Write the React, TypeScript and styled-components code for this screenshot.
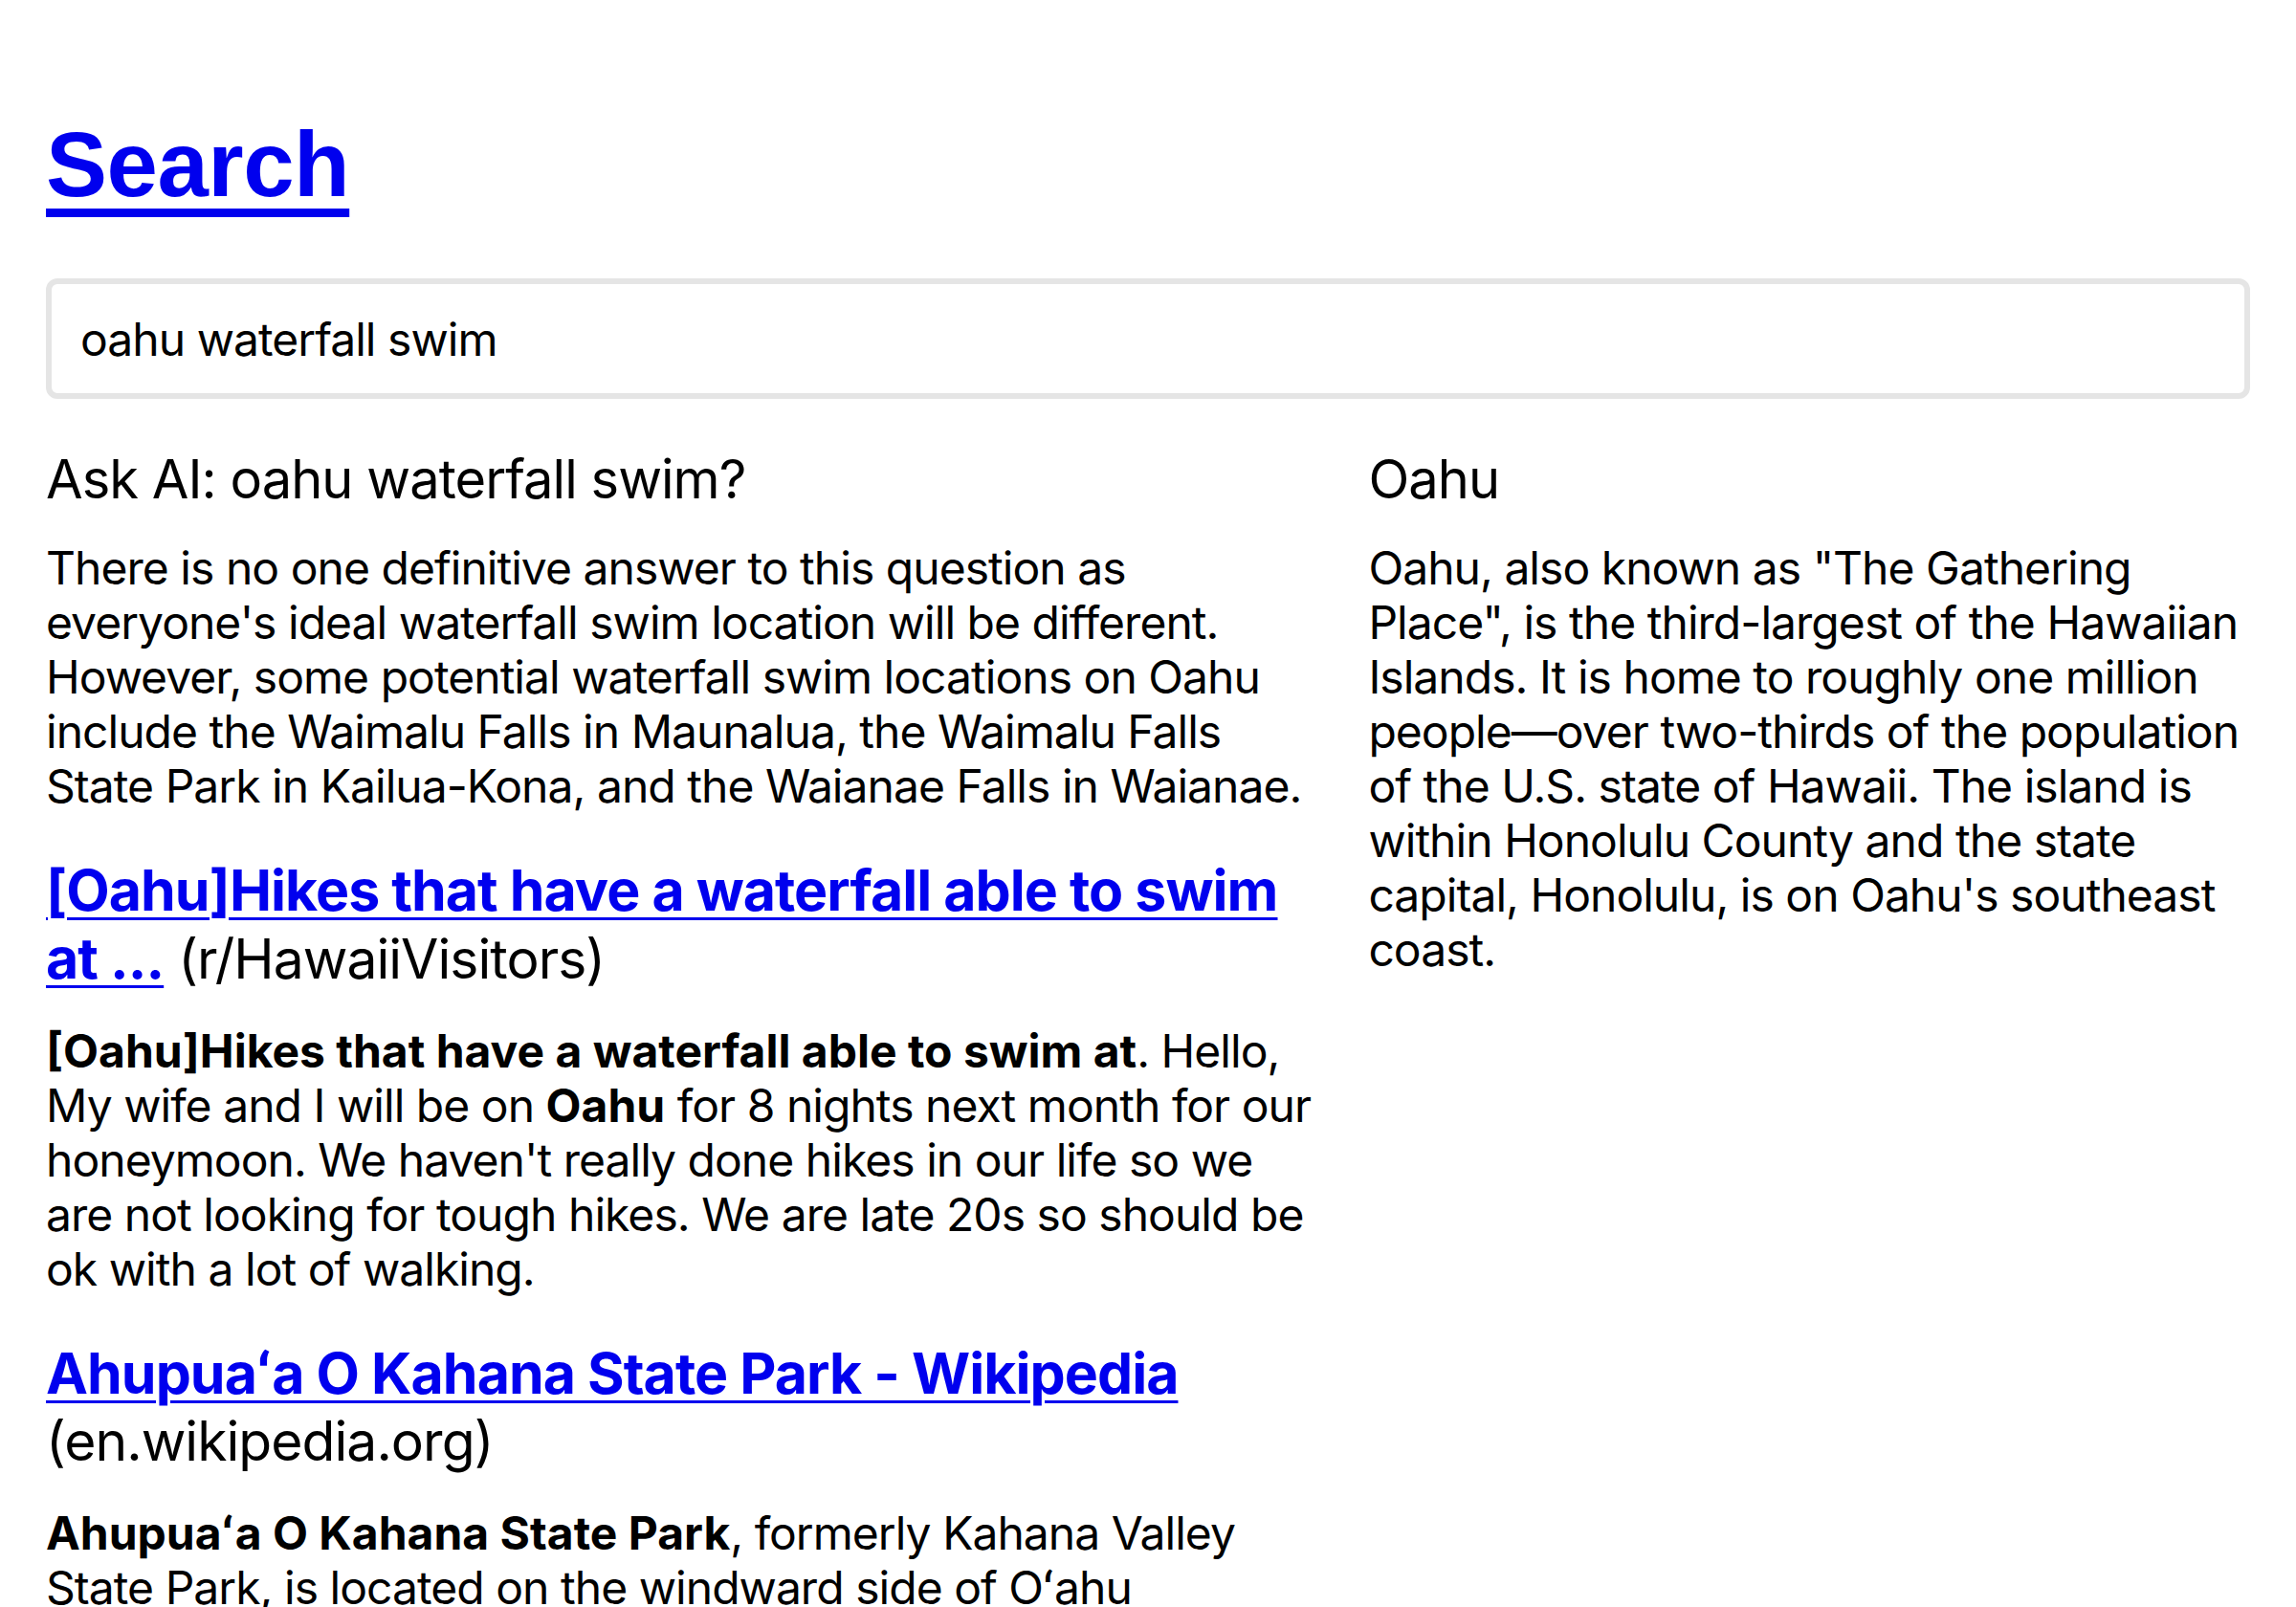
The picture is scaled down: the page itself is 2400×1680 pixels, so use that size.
import React from "react";
import styled, { createGlobalStyle } from "styled-components";

const GlobalStyle = createGlobalStyle`
  html,
  body {
    margin: 0;
    padding: 0;
    background: #fff;
  }

  body {
    font-family: Inter, "Noto Sans", sans-serif;
    font-size: 48px;
    line-height: 57px;
    letter-spacing: -0.96px;
    color: #000;
  }
`;

const Page = styled.main`
  padding: 117px 48px 0;
`;

const Title = styled.h1`
  margin: 0;
  font-family: "Liberation Sans", Arial, sans-serif;
  font-size: 96px;
  line-height: 110px;
  font-weight: 700;
  letter-spacing: -0.5px;
`;

const TitleLink = styled.a`
  color: #0000ee;
  text-decoration: underline;
  text-decoration-thickness: 9px;
  text-underline-offset: 13px;
`;

const SearchBox = styled.input`
  display: block;
  box-sizing: border-box;
  width: 100%;
  height: 126px;
  margin: 64px 0 0;
  padding: 0 30px;
  border: 6px solid #e5e5e5;
  border-radius: 12px;
  font-family: inherit;
  font-size: 48px;
  letter-spacing: -0.96px;
  color: #000;
  background: #fff;
  outline: none;
`;

const Columns = styled.div`
  display: grid;
  grid-template-columns: 3fr 2fr;
  margin-top: 51px;
`;

const Column = styled.section<{ $gutter?: boolean }>`
  min-width: 0;
  padding-right: ${(p) => (p.$gutter ? "48px" : "0")};
`;

const Heading = styled.h3`
  margin: 0 0 30px;
  font-size: 56px;
  line-height: 67px;
  font-weight: 400;
`;

const Paragraph = styled.p`
  margin: 0;
`;

// the bold hits in snippets are set a little wider than the body copy
const Strong = styled.b`
  font-weight: 700;
  letter-spacing: 0;
`;

const Result = styled.article`
  margin-top: 46px;
`;

const ResultTitle = styled.h4`
  margin: 0 0 32px;
  font-size: 57px;
  line-height: 70px;
  font-weight: 400;
`;

const ResultLink = styled.a`
  color: #0000ee;
  font-size: 59px;
  font-weight: 700;
  text-decoration: underline;
  text-decoration-thickness: 3px;
  text-underline-offset: 7px;
`;

const results = [
  {
    title: "[Oahu]Hikes that have a waterfall able to swim at ...",
    source: "r/HawaiiVisitors",
    snippet: (
      <>
        <Strong>[Oahu]Hikes that have a waterfall able to swim at</Strong>.
        Hello, My wife and I will be on <Strong>Oahu</Strong> for 8 nights next
        month for our honeymoon. We haven't really done hikes in our life so we
        are not looking for tough hikes. We are late 20s so should be ok with a
        lot of walking.
      </>
    ),
  },
  {
    title: "Ahupuaʻa O Kahana State Park - Wikipedia",
    source: "en.wikipedia.org",
    snippet: (
      <>
        <Strong>Ahupuaʻa O Kahana State Park</Strong>, formerly Kahana Valley
        State Park, is located on the windward side of Oʻahu overlooking Kahana
        Bay.
      </>
    ),
  },
];

export default function App() {
  return (
    <>
      <GlobalStyle />
      <Page>
        <Title>
          <TitleLink href="#">Search</TitleLink>
        </Title>
        <SearchBox type="text" defaultValue="oahu waterfall swim" />
        <Columns>
          <Column $gutter>
            <Heading>Ask AI: oahu waterfall swim?</Heading>
            <Paragraph>
              There is no one definitive answer to this question as everyone's
              ideal waterfall swim location will be different. However, some
              potential waterfall swim locations on Oahu include the Waimalu
              Falls in Maunalua, the Waimalu Falls State Park in Kailua-Kona, and
              the Waianae Falls in Waianae.
            </Paragraph>
            {results.map((r) => (
              <Result key={r.source}>
                <ResultTitle>
                  <ResultLink href="#">{r.title}</ResultLink> ({r.source})
                </ResultTitle>
                <Paragraph>{r.snippet}</Paragraph>
              </Result>
            ))}
          </Column>
          <Column>
            <Heading>Oahu</Heading>
            <Paragraph>
              Oahu, also known as "The Gathering Place", is the third-largest of
              the Hawaiian Islands. It is home to roughly one million
              people—over two-thirds of the population of the U.S. state of
              Hawaii. The island is within Honolulu County and the state capital,
              Honolulu, is on Oahu's southeast coast.
            </Paragraph>
          </Column>
        </Columns>
      </Page>
    </>
  );
}
